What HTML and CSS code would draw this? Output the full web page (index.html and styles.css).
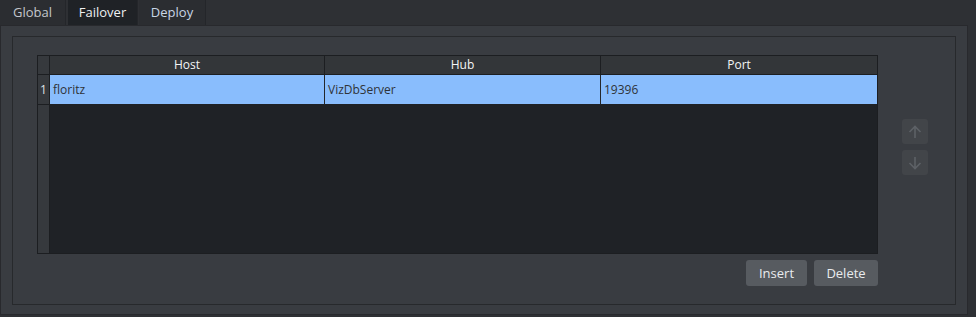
FILE: index.html
```html
<!DOCTYPE html>
<html lang="en">

<head>
    <meta charset="UTF-8">
    <title>Failover</title>
    <link rel="stylesheet" href="styles.css">
</head>

<body>
    <ul class="tabs">
        <li class="global">Global</li>
        <li class="current">Failover</li>
        <li class="deploy">Deploy</li>
    </ul>

    <div class="pane">
        <div class="group">
            <div class="main">
                <div class="grid">
                    <div class="corner"></div>
                    <div class="head">Host</div>
                    <div class="head">Hub</div>
                    <div class="head last">Port</div>

                    <div class="num">1</div>
                    <div class="cell sel">floritz</div>
                    <div class="cell sel">VizDbServer</div>
                    <div class="cell sel last">19396</div>

                    <div class="num empty"></div>
                    <div class="body"></div>
                </div>
                <div class="actions">
                    <button>Insert</button>
                    <button>Delete</button>
                </div>
            </div>
            <div class="side">
                <button class="arrow">
                    <svg width="16" height="16" viewBox="0 0 16 16"><path d="M8 14V2.5M2.5 8L8 2.5 13.5 8" fill="none" stroke="#5d6166" stroke-width="1.6"/></svg>
                </button>
                <button class="arrow">
                    <svg width="16" height="16" viewBox="0 0 16 16"><path d="M8 2v11.5M2.5 8L8 13.5 13.5 8" fill="none" stroke="#5d6166" stroke-width="1.6"/></svg>
                </button>
            </div>
        </div>
    </div>
</body>

</html>
```

FILE: styles.css
```css
* {
    margin: 0;
    padding: 0;
    box-sizing: border-box;
}

body {
    width: 976px;
    height: 317px;
    background: #2e3034;
    font-family: "Open Sans", "Liberation Sans", sans-serif;
    overflow: hidden;
}

.tabs {
    display: flex;
    height: 25px;
    list-style: none;
}

.tabs li {
    height: 25px;
    margin-right: 2px;
    line-height: 24px;
    font-size: 13px;
    text-align: center;
    color: #c3c7cc;
    background: #2b2d31;
    border-right: 1px solid #24262a;
}

.tabs li.global {
    width: 66px;
}

.tabs li.current {
    width: 70px;
    margin-right: 1px;
    background: #1f2226;
    color: #eef0f2;
}

.tabs li.deploy {
    width: 67px;
    color: #c8d6e6;
}

.pane {
    width: 968px;
    height: 290px;
    padding: 10px 11px 9px 11px;
    background: #393c41;
    border: 1px solid #28292d;
}

.group {
    display: flex;
    height: 269px;
    padding: 18px 0 0 24px;
    border: 1px solid #27292c;
}

.main {
    width: 841px;
}

.grid {
    display: grid;
    grid-template-columns: 12px 275px 276px 276px;
    grid-template-rows: 19px 30px 1fr;
    height: 199px;
    background: #1f2226;
    border: 1px solid #1c1e21;
}

.corner,
.num {
    background: #36393d;
    border-right: 1px solid #1c1e21;
    border-bottom: 1px solid #1c1e21;
}

.num {
    font-size: 12px;
    line-height: 29px;
    text-align: center;
    color: #dfe2e6;
}

.num.empty {
    border-bottom: none;
}

.head {
    background: #333639;
    border-right: 1px solid #1c1e21;
    border-bottom: 1px solid #1c1e21;
    font-size: 12px;
    line-height: 18px;
    text-align: center;
    color: #f4f5f6;
}

.head.last,
.cell.last {
    border-right: none;
}

.cell {
    padding-left: 3px;
    font-size: 12px;
    line-height: 29px;
    color: #2f3338;
    border-right: 1px solid #24272b;
    border-bottom: 1px solid #1f2226;
}

.cell.sel {
    background: #89bdfd;
}

.body {
    grid-column: 2 / 5;
}

.actions {
    display: flex;
    justify-content: flex-end;
    gap: 7px;
    margin-top: 6px;
}

.actions button {
    width: 61px;
    height: 26px;
    border: none;
    border-radius: 3px;
    background: #575b60;
    color: #e9ebee;
    font-family: inherit;
    font-size: 13px;
}

.actions button:last-child {
    width: 64px;
}

.side {
    display: flex;
    flex-direction: column;
    gap: 6px;
    margin: 64px 0 0 24px;
}

.arrow {
    display: flex;
    align-items: center;
    justify-content: center;
    width: 26px;
    height: 25px;
    border: none;
    border-radius: 3px;
    background: #424549;
}
```
